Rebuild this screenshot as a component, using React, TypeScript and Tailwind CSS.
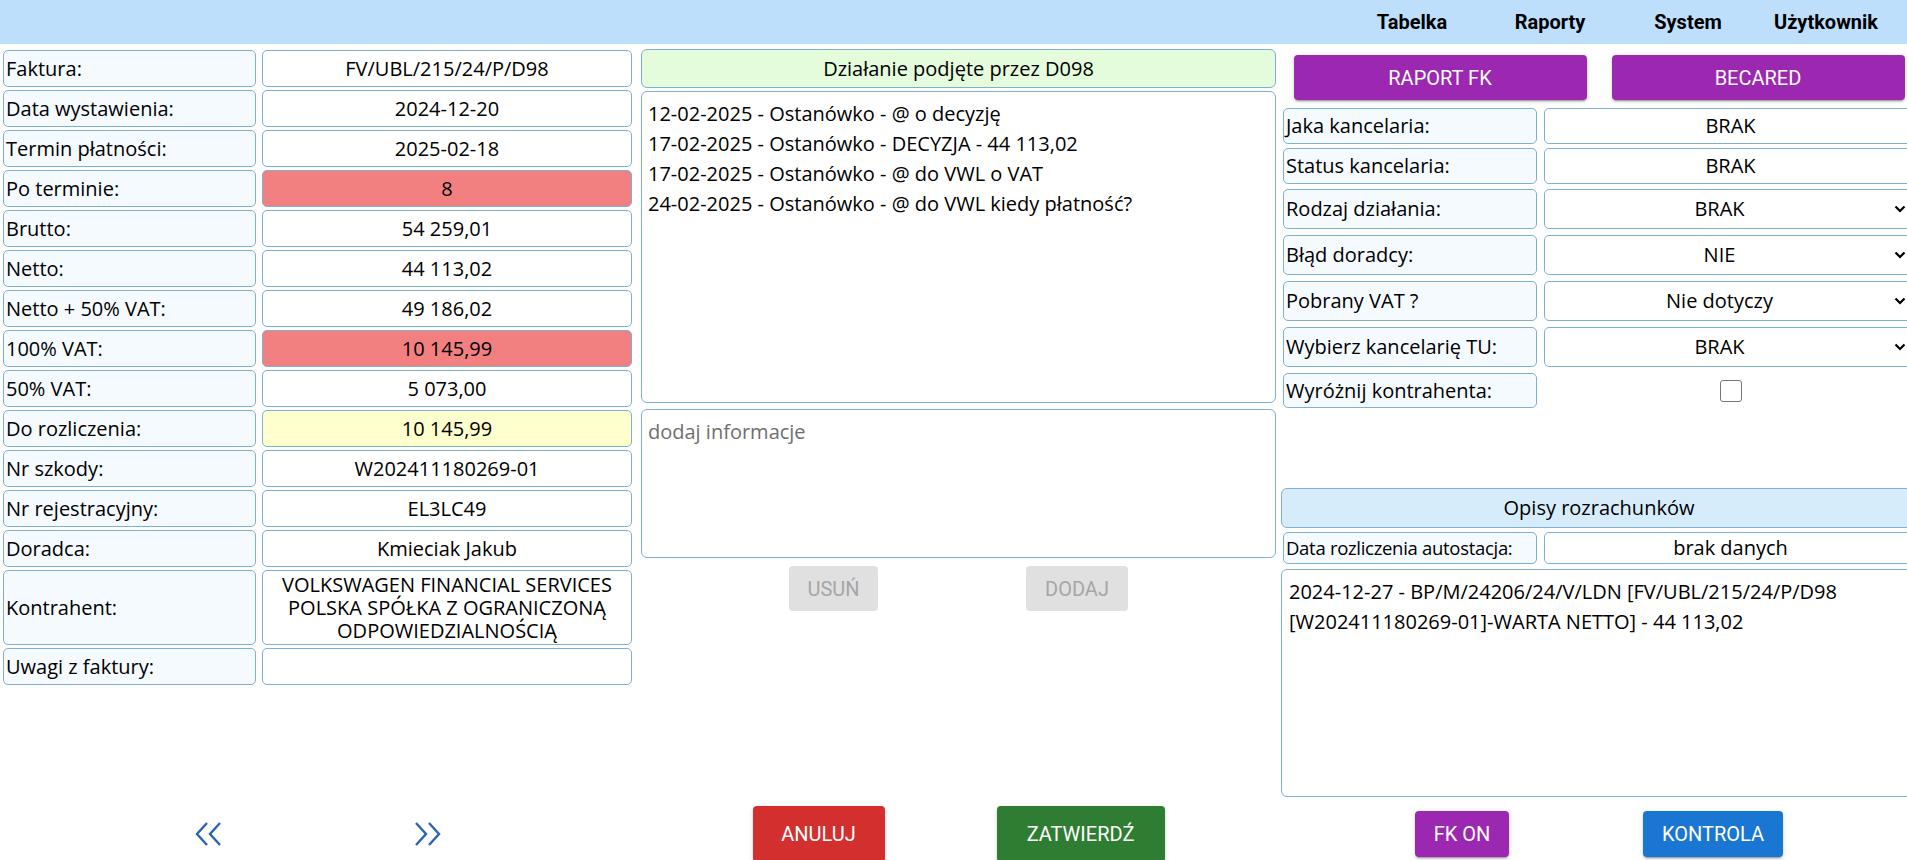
import { ReactNode } from "react";

const border = "border border-[#7fb0d0] rounded-[5px]";
const labelBox = `${border} bg-[#f5faff] flex items-center px-[2px] whitespace-nowrap overflow-hidden`;
const valueBox = `${border} flex items-center justify-center text-center`;

function Row({
  label,
  value,
  tone = "bg-white",
  h = "h-[37px]",
}: {
  label: string;
  value: ReactNode;
  tone?: string;
  h?: string;
}) {
  return (
    <div className={`flex gap-[6px] ${h}`}>
      <div className={`${labelBox} w-[253px] shrink-0`}>{label}</div>
      <div className={`${valueBox} ${tone} flex-1`}>{value}</div>
    </div>
  );
}

function SelectRow({ label, value, className = "" }: { label: string; value: string; className?: string }) {
  return (
    <div className={`flex gap-[7px] h-[40px] ${className}`}>
      <div className={`${labelBox} w-[254px] shrink-0`}>{label}</div>
      <div className={`${border} bg-white flex flex-1 items-center`}>
        <span className="flex-1 text-center">{value}</span>
        <svg width="12" height="8" viewBox="0 0 12 8" className="mr-[10px]">
          <path d="M1.5 1.5 L6 6 L10.5 1.5" fill="none" stroke="#000" strokeWidth="2.2" />
        </svg>
      </div>
    </div>
  );
}

function Chevrons({ dir }: { dir: "left" | "right" }) {
  const d =
    dir === "left"
      ? ["M13 1 L3 12 L13 23", "M26 1 L16 12 L26 23"]
      : ["M4 1 L14 12 L4 23", "M17 1 L27 12 L17 23"];
  return (
    <svg width="30" height="24" viewBox="0 0 30 24">
      {d.map((p) => (
        <path key={p} d={p} fill="none" stroke="#2a63b6" strokeWidth="2.4" />
      ))}
    </svg>
  );
}

const btn = "font-['Roboto',sans-serif] text-[20px] uppercase rounded-[4px] flex items-center justify-center";
const raised = "shadow-[0_3px_1px_-2px_rgba(0,0,0,0.2),0_2px_2px_0_rgba(0,0,0,0.14),0_1px_5px_0_rgba(0,0,0,0.12)]";

const left = [
  ["Faktura:", "FV/UBL/215/24/P/D98"],
  ["Data wystawienia:", "2024-12-20"],
  ["Termin płatności:", "2025-02-18"],
  ["Po terminie:", "8", "bg-[#f28080]"],
  ["Brutto:", "54 259,01"],
  ["Netto:", "44 113,02"],
  ["Netto + 50% VAT:", "49 186,02"],
  ["100% VAT:", "10 145,99", "bg-[#f28080]"],
  ["50% VAT:", "5 073,00"],
  ["Do rozliczenia:", "10 145,99", "bg-[#fdffcc]"],
  ["Nr szkody:", "W202411180269-01"],
  ["Nr rejestracyjny:", "EL3LC49"],
  ["Doradca:", "Kmieciak Jakub"],
];

const logs = [
  "12-02-2025 - Ostanówko - @ o decyzję",
  "17-02-2025 - Ostanówko - DECYZJA - 44 113,02",
  "17-02-2025 - Ostanówko - @ do VWL o VAT",
  "24-02-2025 - Ostanówko - @ do VWL kiedy płatność?",
];

export default function App() {
  return (
    <div className="min-h-screen w-full overflow-hidden bg-white text-black font-['Open_Sans',sans-serif] text-[20px]">
      <nav className="flex h-[44px] items-center justify-end bg-[#bddffc] pr-[12px] font-['Roboto',sans-serif] text-[20px] font-bold">
        {["Tabelka", "Raporty", "System", "Użytkownik"].map((n) => (
          <span key={n} className="w-[138px] text-center">
            {n}
          </span>
        ))}
      </nav>

      <div className="flex h-[756px] w-[1920px] items-start">
        {/* lewa kolumna */}
        <div className="ml-[3px] mt-[6px] flex w-[629px] shrink-0 flex-col gap-[3px]">
          {left.map(([l, v, t]) => (
            <Row key={l} label={l} value={v} tone={t} />
          ))}
          <Row
            label="Kontrahent:"
            h="h-[75px]"
            value={
              <span className="leading-[23px]">
                VOLKSWAGEN FINANCIAL SERVICES POLSKA SPÓŁKA Z OGRANICZONĄ ODPOWIEDZIALNOŚCIĄ
              </span>
            }
          />
          <Row label="Uwagi z faktury:" value="" />
        </div>

        {/* srodkowa kolumna */}
        <div className="ml-[9px] mt-[5px] flex w-[635px] shrink-0 flex-col">
          <div className={`${border} flex h-[39px] items-center justify-center bg-[#e4fbdc] rounded-[6px]`}>
            Działanie podjęte przez D098
          </div>
          <div className={`${border} mt-[3px] h-[312px] px-[6px] pt-[7px] leading-[30px] rounded-[6px]`}>
            {logs.map((l) => (
              <div key={l}>{l}</div>
            ))}
          </div>
          <textarea
            placeholder="dodaj informacje"
            className={`${border} mt-[6px] h-[149px] resize-none px-[6px] pt-[7px] font-['Open_Sans',sans-serif] text-[20px] leading-[30px] outline-none rounded-[6px] placeholder:text-[#6f6f6f]`}
          />
          <div className="mt-[8px] flex justify-center gap-[148px]">
            <button className={`${btn} h-[45px] w-[89px] bg-[#e0e0e0] text-[#a6a6a6]`}>USUŃ</button>
            <button className={`${btn} h-[45px] w-[102px] bg-[#e0e0e0] text-[#a6a6a6]`}>DODAJ</button>
          </div>
        </div>

        {/* prawa kolumna */}
        <div className="ml-[5px] mt-[11px] flex w-[636px] shrink-0 flex-col">
          <div className="flex justify-around">
            <button className={`${btn} ${raised} h-[45px] w-[293px] bg-[#9c27b0] text-white`}>RAPORT FK</button>
            <button className={`${btn} ${raised} h-[45px] w-[293px] bg-[#9c27b0] text-white`}>BECARED</button>
          </div>
          <div className="mt-[8px] flex flex-col gap-[4px] pl-[2px]">
            <div className="flex h-[36px] gap-[7px]">
              <div className={`${labelBox} w-[254px] shrink-0`}>Jaka kancelaria:</div>
              <div className={`${valueBox} flex-1 bg-white`}>BRAK</div>
            </div>
            <div className="flex h-[36px] gap-[7px]">
              <div className={`${labelBox} w-[254px] shrink-0`}>Status kancelaria:</div>
              <div className={`${valueBox} flex-1 bg-white`}>BRAK</div>
            </div>
          </div>
          <div className="flex flex-col gap-[6px] pl-[2px]">
            <SelectRow className="mt-[5px]" label="Rodzaj działania:" value="BRAK" />
            <SelectRow label="Błąd doradcy:" value="NIE" />
            <SelectRow label="Pobrany VAT ?" value="Nie dotyczy" />
            <SelectRow label="Wybierz kancelarię TU:" value="BRAK" />
            <div className="flex h-[35px] gap-[7px]">
              <div className={`${labelBox} w-[254px] shrink-0`}>Wyróżnij kontrahenta:</div>
              <div className="flex flex-1 items-center justify-center">
                <input type="checkbox" className="h-[22px] w-[22px] appearance-none rounded-[3px] border border-[#767676] bg-white" />
              </div>
            </div>
          </div>

          <div className={`${border} mt-[80px] flex h-[40px] items-center justify-center bg-[#d7ecfa] rounded-[6px]`}>
            Opisy rozrachunków
          </div>
          <div className="mt-[4px] flex h-[32px] gap-[7px] pl-[2px]">
            <div className={`${labelBox} w-[254px] shrink-0 text-[18.5px] tracking-[-0.3px]`}>
              Data rozliczenia autostacja:
            </div>
            <div className={`${valueBox} flex-1 bg-white`}>brak danych</div>
          </div>
          <div className={`${border} mt-[5px] h-[228px] px-[7px] pt-[7px] leading-[30px] rounded-[6px]`}>
            2024-12-27 - BP/M/24206/24/V/LDN [FV/UBL/215/24/P/D98 [W202411180269-01]-WARTA NETTO] - 44 113,02
          </div>
        </div>
      </div>

      {/* dolny pasek */}
      <div className="flex h-[68px] w-[1920px] items-center">
        <div className="ml-[3px] flex w-[629px] shrink-0 justify-center gap-[188px]">
          <Chevrons dir="left" />
          <Chevrons dir="right" />
        </div>
        <div className="ml-[9px] flex w-[635px] shrink-0 justify-center gap-[112px]">
          <button className={`${btn} ${raised} h-[56px] w-[132px] bg-[#d32f2f] text-white`}>ANULUJ</button>
          <button className={`${btn} ${raised} h-[56px] w-[168px] bg-[#2e7d32] text-white`}>ZATWIERDŹ</button>
        </div>
        <div className="ml-[5px] flex w-[636px] shrink-0 justify-center gap-[134px]">
          <button className={`${btn} ${raised} h-[46px] w-[94px] bg-[#9c27b0] text-white`}>FK ON</button>
          <button className={`${btn} ${raised} h-[46px] w-[140px] bg-[#1976d2] text-white`}>KONTROLA</button>
        </div>
      </div>
    </div>
  );
}
